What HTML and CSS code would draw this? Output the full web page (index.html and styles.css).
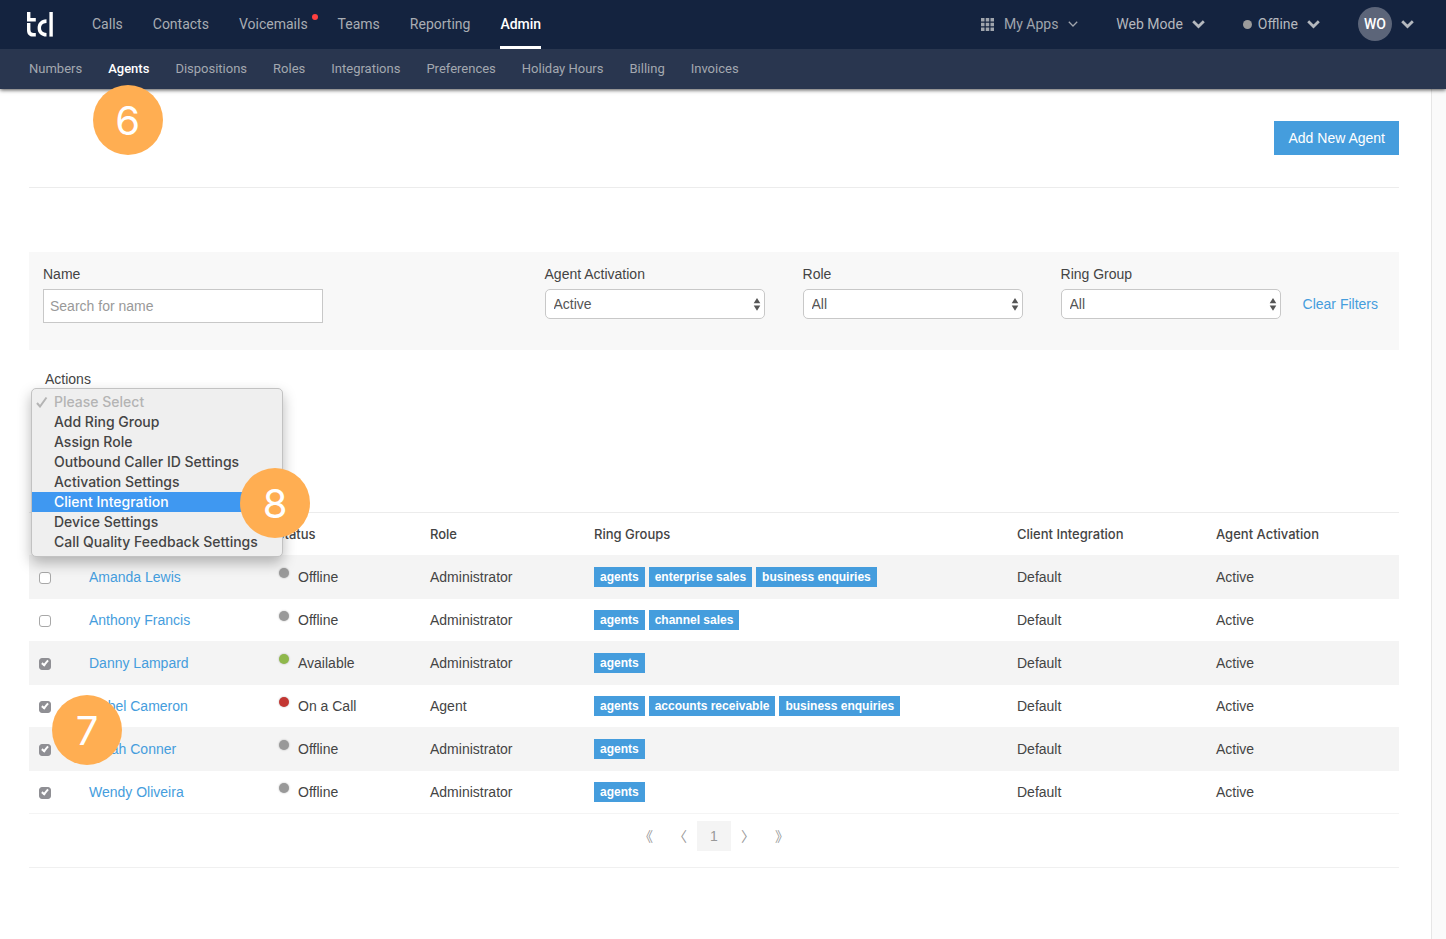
FILE: index.html
```html
<!DOCTYPE html>
<html lang="en">
<head>
  <meta charset="UTF-8">
  <meta name="viewport" content="width=device-width, initial-scale=1.0">
  <title>Agents</title>
  <link rel="stylesheet" href="styles.css">
</head>
<body>
  <header class="site-header">
    <!-- Main navigation -->
    <div class="top-bar">
      <a href="#" class="logo" aria-label="Home">
        <svg width="28" height="26" viewBox="0 0 28 26" fill="#fff">
          <path d="M1 0h3.400v6h5.400v3.400H1z"/>
          <path d="M1 11h3.400v6.500c0 2.700 1.300 3.500 3.200 3.500h2.200v3.600H7.200C3 24.600 1 22.200 1 18z"/>
          <path d="M20.500 7.300v3.600l-1.500.3c-2.600.5-4 2.200-4 4.800 0 2.700 1.800 4.700 5.500 5v3.600c-5.800-.2-8.900-3.600-8.900-8.600 0-5 3.300-8.300 8.900-8.700z"/>
          <path d="M23.400 0h3.400v24.600h-3.400z"/>
        </svg>
      </a>
      <nav class="main-nav">
        <a href="#">Calls</a>
        <a href="#">Contacts</a>
        <a href="#" class="has-alert">Voicemails</a>
        <a href="#">Teams</a>
        <a href="#">Reporting</a>
        <a href="#" class="active">Admin</a>
      </nav>
      <div class="user-tools">
        <button type="button" class="tool apps">
          <svg class="grid-icon" width="13" height="13" viewBox="0 0 13 13" fill="currentColor">
            <path d="M0 0h3.500v3.500H0zM4.750 0h3.500v3.500h-3.500zM9.500 0H13v3.500H9.500zM0 4.750h3.500v3.500H0zM4.750 4.750h3.500v3.500h-3.500zM9.500 4.750H13v3.500H9.500zM0 9.500h3.500V13H0zM4.750 9.500h3.500V13h-3.500zM9.500 9.500H13V13H9.500z"/>
          </svg>
          My Apps
          <svg class="thin-chevron" width="10" height="6" viewBox="0 0 10 6" fill="none" stroke="currentColor" stroke-width="1.300"><path d="M.8.8 5 5 9.200.8"/></svg>
        </button>
        <button type="button" class="tool">
          Web Mode
          <svg width="13" height="9" viewBox="0 0 13 9" fill="none" stroke="currentColor" stroke-width="2.800"><path d="M1.200 1.300 6.500 6.500l5.300-5.200"/></svg>
        </button>
        <button type="button" class="tool">
          <span class="presence"></span>Offline
          <svg width="13" height="9" viewBox="0 0 13 9" fill="none" stroke="currentColor" stroke-width="2.800"><path d="M1.200 1.300 6.500 6.500l5.300-5.200"/></svg>
        </button>
        <button type="button" class="tool">
          <span class="avatar">WO</span>
          <svg width="13" height="9" viewBox="0 0 13 9" fill="none" stroke="currentColor" stroke-width="2.800"><path d="M1.200 1.300 6.500 6.500l5.300-5.200"/></svg>
        </button>
      </div>
    </div>

    <!-- Admin sections -->
    <nav class="sub-nav">
      <a href="#">Numbers</a>
      <div class="step-anchor"><a href="#" class="active">Agents</a><span class="step step-nav">6</span></div>
      <a href="#">Dispositions</a>
      <a href="#">Roles</a>
      <a href="#">Integrations</a>
      <a href="#">Preferences</a>
      <a href="#">Holiday Hours</a>
      <a href="#">Billing</a>
      <a href="#">Invoices</a>
    </nav>
  </header>

  <main class="page">
    <div class="page-actions">
      <button type="button" class="btn-primary">Add New Agent</button>
    </div>

    <!-- Filters -->
    <form class="filters">
      <div class="field field-name">
        <label for="name">Name</label>
        <input type="text" id="name" placeholder="Search for name">
      </div>
      <div class="field">
        <label for="activation">Agent Activation</label>
        <div class="select">
          <select id="activation"><option>Active</option></select>
          <svg width="8" height="13" viewBox="0 0 8 13" fill="#555"><path d="M4 0l3.300 5.300H.7zM.7 7.500h6.600L4 12.800z"/></svg>
        </div>
      </div>
      <div class="field">
        <label for="role">Role</label>
        <div class="select">
          <select id="role"><option>All</option></select>
          <svg width="8" height="13" viewBox="0 0 8 13" fill="#555"><path d="M4 0l3.300 5.300H.7zM.7 7.500h6.600L4 12.800z"/></svg>
        </div>
      </div>
      <div class="field">
        <label for="group">Ring Group</label>
        <div class="select">
          <select id="group"><option>All</option></select>
          <svg width="8" height="13" viewBox="0 0 8 13" fill="#555"><path d="M4 0l3.300 5.300H.7zM.7 7.500h6.600L4 12.800z"/></svg>
        </div>
      </div>
      <a href="#" class="clear">Clear Filters</a>
    </form>

    <!-- Bulk actions -->
    <div class="bulk">
      <span class="bulk-label" id="actions-label">Actions</span>
      <ul class="menu" role="listbox" aria-labelledby="actions-label">
        <li role="option" class="disabled">
          <svg width="12" height="12" viewBox="0 0 12 12" fill="none" stroke="currentColor" stroke-width="2"><path d="M1 7l3 3.500L10.500 1.500"/></svg>
          Please Select
        </li>
        <li role="option">Add Ring Group</li>
        <li role="option">Assign Role</li>
        <li role="option">Outbound Caller ID Settings</li>
        <li role="option">Activation Settings</li>
        <li role="option" class="selected" aria-selected="true">Client Integration<span class="step step-menu">8</span></li>
        <li role="option">Device Settings</li>
        <li role="option">Call Quality Feedback Settings</li>
      </ul>
    </div>

    <!-- Agents -->
    <table class="agents">
      <colgroup>
        <col class="col-check">
        <col class="col-name">
        <col class="col-status">
        <col class="col-role">
        <col class="col-groups">
        <col class="col-client">
        <col class="col-activation">
      </colgroup>
      <thead>
        <tr>
          <th></th>
          <th></th>
          <th>Status</th>
          <th>Role</th>
          <th>Ring Groups</th>
          <th>Client Integration</th>
          <th>Agent Activation</th>
        </tr>
      </thead>
      <tbody>
        <tr>
          <td><input type="checkbox" aria-label="Amanda Lewis"></td>
          <td><a href="#">Amanda Lewis</a></td>
          <td><span class="status">Offline</span></td>
          <td>Administrator</td>
          <td><div class="tags"><span>agents</span><span>enterprise sales</span><span>business enquiries</span></div></td>
          <td>Default</td>
          <td>Active</td>
        </tr>
        <tr>
          <td><input type="checkbox" aria-label="Anthony Francis"></td>
          <td><a href="#">Anthony Francis</a></td>
          <td><span class="status">Offline</span></td>
          <td>Administrator</td>
          <td><div class="tags"><span>agents</span><span>channel sales</span></div></td>
          <td>Default</td>
          <td>Active</td>
        </tr>
        <tr>
          <td><input type="checkbox" aria-label="Danny Lampard" checked></td>
          <td><a href="#">Danny Lampard</a></td>
          <td><span class="status available">Available</span></td>
          <td>Administrator</td>
          <td><div class="tags"><span>agents</span></div></td>
          <td>Default</td>
          <td>Active</td>
        </tr>
        <tr>
          <td class="step-anchor"><input type="checkbox" aria-label="Isabel Cameron" checked><span class="step step-row">7</span></td>
          <td><a href="#">Isabel Cameron</a></td>
          <td><span class="status on-call">On a Call</span></td>
          <td>Agent</td>
          <td><div class="tags"><span>agents</span><span>accounts receivable</span><span>business enquiries</span></div></td>
          <td>Default</td>
          <td>Active</td>
        </tr>
        <tr>
          <td><input type="checkbox" aria-label="Sarah Conner" checked></td>
          <td><a href="#">Sarah Conner</a></td>
          <td><span class="status">Offline</span></td>
          <td>Administrator</td>
          <td><div class="tags"><span>agents</span></div></td>
          <td>Default</td>
          <td>Active</td>
        </tr>
        <tr>
          <td><input type="checkbox" aria-label="Wendy Oliveira" checked></td>
          <td><a href="#">Wendy Oliveira</a></td>
          <td><span class="status">Offline</span></td>
          <td>Administrator</td>
          <td><div class="tags"><span>agents</span></div></td>
          <td>Default</td>
          <td>Active</td>
        </tr>
      </tbody>
    </table>

    <nav class="pager">
      <a href="#">《</a>
      <a href="#">〈</a>
      <a href="#" class="current">1</a>
      <a href="#">〉</a>
      <a href="#">》</a>
    </nav>
  </main>
</body>
</html>
```
FILE: styles.css
```css
* {
  box-sizing: border-box;
}

body {
  margin: 0;
  min-height: 100vh;
  display: flex;
  flex-direction: column;
  font-family: "Liberation Sans", Arial, sans-serif;
  font-size: 14px;
  line-height: 20px;
  color: #444;
  background: #fafafa;
}

a {
  color: #459ddd;
  text-decoration: none;
}

button,
input,
select {
  font: inherit;
  color: inherit;
}

/* Header */
.site-header {
  position: relative;
  z-index: 2;
  font-family: Roboto, sans-serif;
  background: #29364f;
  box-shadow: 0 1px 4px rgba(0, 0, 0, 0.7);
}

.top-bar {
  display: flex;
  align-items: center;
  height: 49px;
  padding: 0 32px 0 26px;
  background: #14233f;
}

.logo {
  display: flex;
  margin-right: 38px;
}

.main-nav {
  display: flex;
  gap: 30px;
  height: 100%;
}

.main-nav a {
  position: relative;
  padding: 14px 0 12px;
  border-bottom: 3px solid transparent;
  color: #a9adb3;
}

.main-nav a.active {
  color: #fff;
  font-weight: 500;
  border-color: #fff;
}

.has-alert::after {
  content: "";
  position: absolute;
  top: 14px;
  right: -10px;
  width: 6px;
  height: 6px;
  border-radius: 50%;
  background: #ff4040;
}

.user-tools {
  display: flex;
  align-items: center;
  align-self: flex-start;
  gap: 38px;
  height: 48px;
  margin-left: auto;
}

.tool {
  display: flex;
  align-items: center;
  gap: 9px;
  padding: 0;
  border: 0;
  background: none;
  color: #b4b8be;
  cursor: pointer;
}

.apps {
  gap: 10px;
  color: #a0a5ad;
}

.presence {
  width: 9px;
  height: 9px;
  margin-right: -3px;
  border-radius: 50%;
  background: #9b9b9b;
}

.avatar {
  width: 34px;
  height: 34px;
  border-radius: 50%;
  background: #5c6579;
  color: #fff;
  font-weight: 500;
  line-height: 34px;
  text-align: center;
}

.sub-nav {
  display: flex;
  gap: 26px;
  height: 40px;
  padding: 10px 29px;
  font-size: 13px;
}

.sub-nav a {
  color: #a3a8af;
}

.sub-nav .active {
  color: #fff;
  font-weight: 500;
}

/* Numbered markers */
.step-anchor {
  position: relative;
}

.step {
  position: absolute;
  z-index: 3;
  width: 70px;
  height: 70px;
  border-radius: 50%;
  background: #ffae52;
  color: #fff;
  font-family: Inter, sans-serif;
  font-size: 40px;
  font-weight: 400;
  line-height: 72px;
  text-align: center;
}

.step-nav {
  top: 26px;
  left: 50%;
  margin-left: -36px;
}

.step-menu {
  top: -24px;
  right: -28px;
}

.step-row {
  top: 10px;
  left: 23px;
}

/* Page */
.page {
  flex: 1;
  margin-right: 14px;
  padding: 32px 32px 32px 29px;
  border-right: 1px solid #e6e6e6;
  background: #fff;
}

.page-actions {
  display: flex;
  justify-content: flex-end;
  padding-bottom: 32px;
  border-bottom: 1px solid #ececec;
}

.btn-primary {
  height: 34px;
  padding: 0 14px;
  border: 0;
  background: #459ddd;
  color: #fff;
  cursor: pointer;
}

/* Filters */
.filters {
  display: flex;
  align-items: flex-start;
  gap: 38px;
  margin-top: 64px;
  padding: 12px 21px 27px 14px;
  background: #f8f8f8;
}

.field label {
  display: block;
  margin-bottom: 5px;
}

.field-name {
  flex: 1;
}

.field-name input {
  display: block;
  width: 280px;
  height: 34px;
  padding: 0 6px;
  border: 1px solid #c8c8c8;
  background: #fff;
}

.field-name input::placeholder {
  color: #999;
}

.select {
  position: relative;
}

.select select {
  display: block;
  width: 220px;
  height: 30px;
  padding: 0 8px;
  border: 1px solid #c8c8c8;
  border-radius: 5px;
  background: #fff;
  color: #555;
  appearance: none;
}

.select svg {
  position: absolute;
  top: 9px;
  right: 4px;
  pointer-events: none;
}

.clear {
  margin: 30px 0 0 -16px;
}

/* Bulk actions */
.bulk {
  position: relative;
  height: 162px;
  padding: 19px 16px 0;
}

.menu {
  position: absolute;
  top: 38px;
  left: 2px;
  z-index: 1;
  width: 252px;
  margin: 0;
  padding: 3px 0 4px;
  list-style: none;
  border: 1px solid #c2c2c2;
  border-radius: 5px;
  background: #efefef;
  box-shadow: 0 6px 14px rgba(0, 0, 0, 0.28);
  font-family: Inter, sans-serif;
  font-weight: 500;
}

.menu li {
  position: relative;
  padding-left: 22px;
}

.menu .disabled {
  color: #b4b4b4;
}

.menu .disabled svg {
  position: absolute;
  top: 4px;
  left: 4px;
}

.menu .selected {
  background: #3f98f1;
  color: #fff;
}

/* Agents table */
.agents {
  width: 100%;
  table-layout: fixed;
  border-collapse: separate;
  border-spacing: 0;
  border-top: 1px solid #ececec;
  border-bottom: 1px solid #f4f4f4;
}

.agents th,
.agents td {
  height: 43px;
  padding: 0 10px;
  text-align: left;
}

.agents th {
  height: 42px;
  font-family: Inter, sans-serif;
  font-size: 13px;
  font-weight: 500;
}

.agents td {
  border-top: 1px solid #f4f4f4;
}

.agents tbody tr:nth-child(odd) {
  background: #f4f4f4;
}

.col-check {
  width: 50px;
}

.col-name {
  width: 187px;
}

.col-status {
  width: 154px;
}

.col-role {
  width: 164px;
}

.col-client {
  width: 199px;
}

.col-activation {
  width: 193px;
}

.agents input {
  position: relative;
  display: block;
  width: 12px;
  height: 12px;
  margin: 2px 0 0;
  border: 1px solid #a8a8a8;
  border-radius: 3px;
  background: #fff;
  appearance: none;
}

.agents input:checked {
  border-color: #8f8f94;
  background: #8f8f94;
}

.agents input:checked::after {
  content: "";
  position: absolute;
  top: 0;
  left: 3px;
  width: 2px;
  height: 5px;
  border: solid #fff;
  border-width: 0 2px 2px 0;
  transform: rotate(40deg);
}

.status {
  display: flex;
  gap: 9px;
  padding-left: 3px;
}

.status::before {
  content: "";
  width: 10px;
  height: 10px;
  margin-top: 1px;
  border-radius: 50%;
  background: #999;
  box-shadow: 0 0 2px rgba(0, 0, 0, 0.3);
}

.status.available::before {
  background: #8fb84b;
}

.status.on-call::before {
  background: #c23632;
}

.tags {
  display: flex;
  gap: 4px;
}

.tags span {
  padding: 0 6px;
  background: #459ddd;
  color: #fff;
  font-size: 12px;
  font-weight: bold;
  white-space: nowrap;
}

/* Pagination */
.pager {
  display: flex;
  justify-content: center;
  padding: 7px 0 16px;
  border-bottom: 1px solid #f0f0f0;
}

.pager a {
  width: 34px;
  color: #999;
  font-family: "Liberation Sans", "Noto Sans CJK JP", sans-serif;
  line-height: 30px;
  text-align: center;
}

.pager .current {
  background: #f4f4f4;
}
```
